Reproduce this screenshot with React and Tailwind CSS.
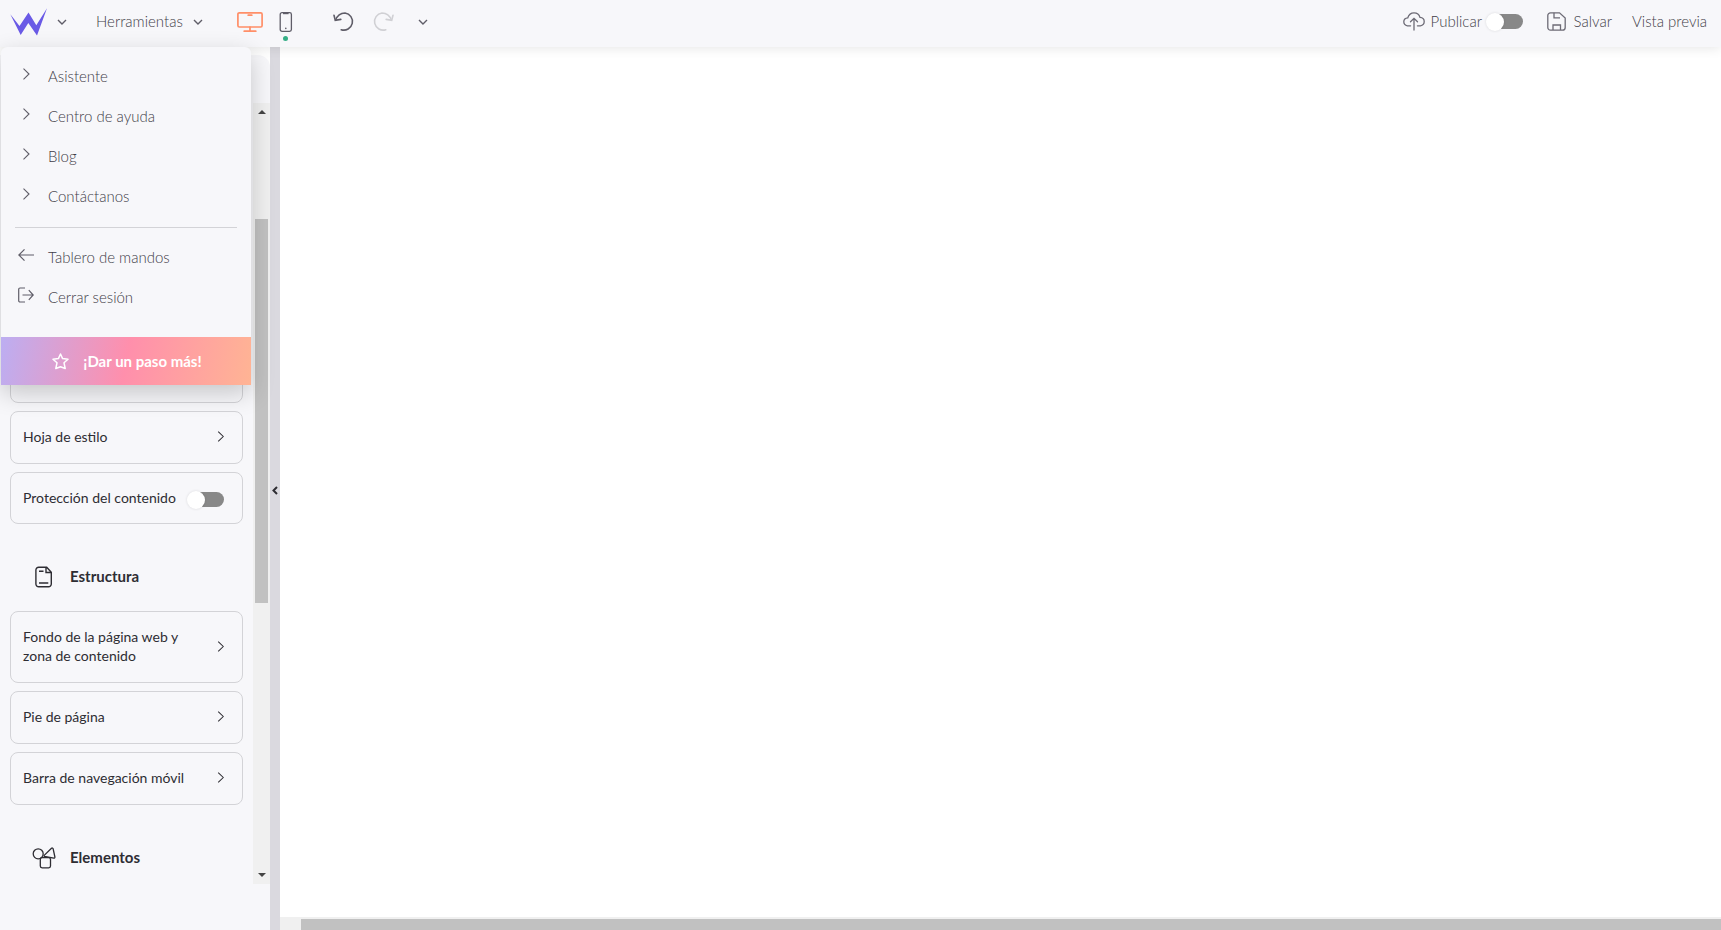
import React, { useState } from 'react';

const ChevronDown = () => (
  <svg width="10" height="10" viewBox="0 0 10 10" fill="none" stroke="#5f5d68" strokeWidth="1.4">
    <path d="M1 3l4 4 4-4" />
  </svg>
);

const ChevronRight = ({ size = 12, color = '#5f5d68' }) => (
  <svg width={size} height={size} viewBox="0 0 12 12" fill="none" stroke={color} strokeWidth="1.1">
    <path d="M3.5 0.7L9 6l-5.5 5.3" />
  </svg>
);

const Logo = () => (
  <svg width="38" height="28" viewBox="0 0 38 28" fill="#6a5ae6">
    <path d="M0.3 6.3L9.5 18L18.5 4.5L26.300 17.300L37 0.300L27 27.500L18.300 15L10.700 27Z" />
  </svg>
);

const DesktopIcon = () => (
  <svg width="26" height="22" viewBox="0 0 26 22" fill="none" stroke="#ff8f68" strokeWidth="1.7" strokeLinecap="round">
    <rect x="0.9" y="1.8" width="24.2" height="14.2" rx="1.4" />
    <path d="M11.2 4.2h3.6M13 16v3.7M7.2 20.2h11.6" />
  </svg>
);

const PhoneIcon = () => (
  <svg width="14" height="22" viewBox="0 0 14 22" fill="none" stroke="#5f5d68" strokeWidth="1.3">
    <rect x="1.2" y="1.7" width="11.2" height="18.6" rx="1.8" />
    <path d="M4 2.2h5.6" strokeWidth="2" />
    <circle cx="6.8" cy="17.4" r="0.8" fill="#5f5d68" stroke="none" />
  </svg>
);

const UndoIcon = ({ color = '#5f5d68' }) => (
  <svg width="22" height="20" viewBox="0 0 22 20" fill="none" stroke={color} strokeWidth="1.6" strokeLinecap="round">
    <path d="M2.6 8.3C4.2 3.6 7.8 1 12 1a8.6 8.6 0 1 1-3.8 16.7" />
    <path d="M1 3.2l1.3 5.2 5.5-1" />
  </svg>
);

const CloudIcon = () => (
  <svg width="22" height="19" viewBox="0 0 22 19" fill="none" stroke="#6d6b76" strokeWidth="1.3" strokeLinecap="round">
    <path d="M7.6 13.8H4.4C2.2 13.4 0.8 11.7 0.8 9.8c0-2 1.5-3.8 4-4C5.8 2.6 8.2 0.8 11 0.8s5.200 1.700 6 4.600c2.500 0.200 4.200 2 4.200 4.200s-1.500 3.900-3.800 4.200h-3" />
    <path d="M11 18V6.500M7.500 9.800L11 6.300l3.500 3.500" />
  </svg>
);

const SaveIcon = () => (
  <svg width="19" height="19" viewBox="0 0 19 19" fill="none" stroke="#6d6b76" strokeWidth="1.3">
    <path d="M3.500 0.800H12.500L18.200 6V15.500a2.700 2.700 0 0 1-2.700 2.700H3.500a2.700 2.700 0 0 1-2.700-2.700V3.500a2.700 2.700 0 0 1 2.700-2.700Z" />
    <path d="M7 0.800V5.800H13M6 18V13h7.500v5" />
  </svg>
);

const ArrowLeftIcon = () => (
  <svg width="16" height="14" viewBox="0 0 16 14" fill="none" stroke="#5f5d68" strokeWidth="1.2">
    <path d="M16 7H1M6.500 1.300L0.800 7l5.700 5.700" />
  </svg>
);

const LogoutIcon = () => (
  <svg width="16" height="16" viewBox="0 0 16 16" fill="none" stroke="#5f5d68" strokeWidth="1.2">
    <path d="M7 1H2a1.300 1.300 0 0 0-1.300 1.300v11.400A1.300 1.300 0 0 0 2 15H7M4.500 8H15M10.800 3.200L15.200 8l-4.400 4.800" />
  </svg>
);

const StarIcon = () => (
  <svg width="17" height="17" viewBox="0 0 17 17" fill="none" stroke="#fff" strokeWidth="1.5" strokeLinejoin="round">
    <path d="M8.500 1l2.100 4.600 5.400.7-4 3.500 1.200 5.700-4.700-1.700-4.700 1.700L5 9.800 1 6.300l5.400-.7z" />
  </svg>
);

const PageIcon = () => (
  <svg width="22" height="22" viewBox="0 0 22 22" fill="none" stroke="#2e2d33" strokeWidth="1.4">
    <path d="M6.700 1.200h8L19.300 6.200v11.800a2.800 2.800 0 0 1-2.800 2.800H6.700a2.800 2.800 0 0 1-2.800-2.800V4a2.800 2.800 0 0 1 2.800-2.800ZM14 1.200V6.500H19.300M7 5.300H11.500M7 17h9.300" />
  </svg>
);

const ShapesIcon = () => (
  <svg width="24" height="22" viewBox="0 0 24 22" fill="none" stroke="#2e2d33" strokeWidth="1.300" strokeLinejoin="round">
    <circle cx="6.200" cy="6.800" r="5" />
    <path d="M19.500 1.200a1 1 0 0 1 1.600.5l1.800 8.300a1 1 0 0 1-1 1.200L12.500 9.500a.8.8 0 0 1-.3-1.100z" />
    <rect x="8.300" y="10.600" width="10.200" height="10.200" rx="1.800" />
  </svg>
);

const Toggle = ({ id }) => (
  <span className="relative flex h-5 w-[37px] items-center">
    <input id={id} type="checkbox" className="peer absolute inset-0 z-10 m-0 h-full w-full cursor-pointer opacity-0" />
    <span className="ml-2 h-[15px] flex-1 rounded-full bg-[#888888]" />
    <span className="absolute left-0 size-[18px] rounded-full bg-white shadow-[0_0_3px_rgba(0,0,0,0.12)] peer-checked:left-[19px]" />
  </span>
);

const MenuItem = ({ icon, children }) => (
  <li>
    <a href="#" className="flex h-10 items-center">
      <span className="flex w-[47px] shrink-0 justify-center pb-1 pl-[2px]">{icon}</span>
      {children}
    </a>
  </li>
);

const Card = ({ children }) => (
  <button className="flex w-full shrink-0 items-center justify-between rounded-lg border border-[#d3d3d7] px-3 pt-[15px] pb-[17px] text-left">
    <span className="w-[170px]">{children}</span>
    <span className="mr-1">
      <ChevronRight size={11} color="#2e2d33" />
    </span>
  </button>
);

const SectionTitle = ({ icon, children }) => (
  <h2 className="flex h-[71px] shrink-0 items-center pt-[18px] pl-[22px] text-[15px] font-bold text-[#2e2d33]">
    <span className="w-[38px]">{icon}</span>
    {children}
  </h2>
);

const links = ['Asistente', 'Centro de ayuda', 'Blog', 'Contáctanos'];

const App = () => {
  const [menuOpen, setMenuOpen] = useState(true);

  return (
    <div className="flex h-screen flex-col overflow-hidden bg-[#f7f7fa] font-['Lato',sans-serif] text-[15px] font-light text-[#3f3d48]">
      {/* Top bar */}
      <header className="relative z-20 flex h-[47px] shrink-0 items-center justify-between bg-[#f7f7fa] pr-[14px] pl-[10px] shadow-[0_0_12px_rgba(0,0,0,0.12)]">
        <div className="flex h-full items-center pb-1">
          <button aria-label="Menú" className="flex items-center gap-[9px]" onClick={() => setMenuOpen(!menuOpen)}>
            <Logo />
            <ChevronDown />
          </button>
          <button className="ml-[29px] flex items-center gap-[9px]">
            <span className="w-[88px] text-left">Herramientas</span>
            <ChevronDown />
          </button>
          <button aria-label="Escritorio" className="ml-[34px]">
            <DesktopIcon />
          </button>
          <button aria-label="Móvil" className="relative ml-4">
            <PhoneIcon />
            <span className="absolute -bottom-2 left-1 size-[5px] rounded-full bg-[#35ae86]" />
          </button>
          <button aria-label="Deshacer" className="ml-10">
            <UndoIcon />
          </button>
          <button aria-label="Rehacer" className="ml-[17px] -scale-x-100">
            <UndoIcon color="#d0d0d4" />
          </button>
          <button aria-label="Historial" className="ml-6">
            <ChevronDown />
          </button>
        </div>
        <div className="flex h-full items-center pb-1">
          <CloudIcon />
          <label htmlFor="publish" className="mr-[2px] ml-[6px] w-[53px]">Publicar</label>
          <Toggle id="publish" />
          <button className="ml-6 flex items-center gap-2">
            <SaveIcon />
            Salvar
          </button>
          <button className="ml-5">Vista previa</button>
        </div>

        {/* Dropdown */}
        {menuOpen && (
          <nav className="absolute top-full left-px w-[250px] rounded-t-md bg-[#f7f7fa] pt-[9px] shadow-[0_8px_24px_rgba(0,0,0,0.2)]">
            <ul>
              {links.map((link) => (
                <MenuItem key={link} icon={<ChevronRight />}>{link}</MenuItem>
              ))}
            </ul>
            <hr className="mx-[14px] mt-[11px] mb-[9px] border-[#d3d3d7]" />
            <ul>
              <MenuItem icon={<ArrowLeftIcon />}>Tablero de mandos</MenuItem>
              <MenuItem icon={<LogoutIcon />}>Cerrar sesión</MenuItem>
            </ul>
            <button className="mt-5 flex h-12 w-full items-center justify-center gap-[14px] bg-[linear-gradient(100deg,#bcaef2,#ff8fac_50%,#ffb494)] pl-[2px] font-bold text-white">
              <StarIcon />
              ¡Dar un paso más!
            </button>
          </nav>
        )}
      </header>

      <div className="flex min-h-0 flex-1">
        {/* Sidebar */}
        <aside className="flex w-[270px] shrink-0 flex-col bg-white pt-2">
          <div className="h-12 shrink-0 rounded-tr-xl bg-[#f7f7fa]" />
          <div className="flex min-h-0 flex-1 bg-[#f7f7fa]">
            <div className="flex flex-1 flex-col justify-end gap-2 overflow-hidden px-[10px] text-[14px] leading-[19px] font-normal text-[#2e2d33]">
              <div className="h-[53px] shrink-0 rounded-lg border border-[#d3d3d7]" />
              <Card>Hoja de estilo</Card>
              <div className="flex shrink-0 items-center justify-between rounded-lg border border-[#d3d3d7] px-3 pt-[15px] pb-4">
                <label htmlFor="protect">Protección del contenido</label>
                <span className="-my-1 mr-[6px] pt-1">
                  <Toggle id="protect" />
                </span>
              </div>
              <SectionTitle icon={<PageIcon />}>Estructura</SectionTitle>
              <Card>Fondo de la página web y zona de contenido</Card>
              <Card>Pie de página</Card>
              <Card>Barra de navegación móvil</Card>
              <SectionTitle icon={<ShapesIcon />}>Elementos</SectionTitle>
            </div>
            <div className="flex w-[17px] flex-col items-center justify-between bg-[#f0f0f0] py-[7px]">
              <span className="border-x-4 border-b-4 border-x-transparent border-b-[#444444]" />
              <span className="mt-[105px] mb-auto h-1/2 w-[13px] bg-[#c1c1c1]" />
              <span className="border-x-4 border-t-4 border-x-transparent border-t-[#444444]" />
            </div>
          </div>
          <div className="h-[46px] shrink-0 bg-[#f7f7fa]" />
        </aside>

        <button aria-label="Ocultar panel" className="flex w-[10px] shrink-0 items-center justify-center bg-[#dad9df] pt-1">
          <svg width="6" height="9" viewBox="0 0 6 9" fill="none" stroke="#2e2d33" strokeWidth="2">
            <path d="M5 1L1.500 4.500 5 8" />
          </svg>
        </button>

        {/* Canvas */}
        <main className="flex min-w-0 flex-1 flex-col bg-white">
          <div className="flex-1" />
          <div className="h-[13px] bg-[#f0f0f0] pt-[2px] pl-[21px]">
            <div className="h-full bg-[#c1c1c1]" />
          </div>
        </main>
      </div>
    </div>
  );
};

export default App;
